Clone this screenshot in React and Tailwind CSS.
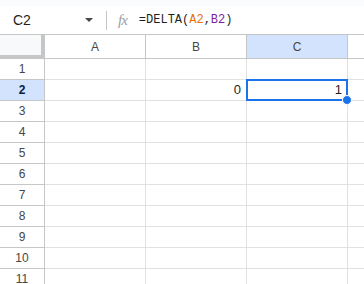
import { useState } from 'react'

const cols = ['A', 'B', 'C']
const rows = [1, 2, 3, 4, 5, 6, 7, 8, 9, 10, 11]

export default function App() {
  const [sel] = useState({ col: 'C', row: 2 })

  const cellValue = (c, r) => {
    if (r === 2 && c === 'B') return '0'
    if (r === 2 && c === 'C') return '1'
    return ''
  }

  return (
    <div className="w-[364px] h-[284px] overflow-hidden bg-white font-['Roboto','Liberation_Sans',sans-serif] text-[#1f1f1f]">
      <div className="h-[6px] bg-[#f9fbfd]" />

      {/* formula bar */}
      <div className="flex items-center h-[29px] border-b border-[#c4c7c5]">
        <div className="w-[80px] pl-[13px] text-[14px] font-['Liberation_Sans',sans-serif] text-[#1f1f1f]">C2</div>
        <svg width="10" height="6" viewBox="0 0 10 6" className="ml-[4px]">
          <path d="M1 1h8L5 5z" fill="#444746" />
        </svg>
        <div className="ml-[12px] w-px h-[19px] bg-[#c4c7c5]" />
        <div className="ml-[11px] text-[15px] italic font-['Liberation_Serif',serif] text-[#9aa0a6] tracking-[-1px]">fx</div>
        <div className="ml-[12px] text-[12px] font-['Liberation_Mono',monospace]">
          =DELTA(<span className="text-[#e8710a]">A2</span>,<span className="text-[#7b1fa2]">B2</span>)
        </div>
      </div>

      {/* column headers */}
      <div className="flex h-[24px]">
        <div className="w-[45px] shrink-0 bg-[#f8f9fa] border-r-[4px] border-b-[4px] border-[#c4c7c5]" />
        {cols.map(c => (
          <div
            key={c}
            className={`w-[101px] shrink-0 flex items-center justify-center text-[12px] text-[#444746] border-r border-b border-[#c4c7c5] font-['Liberation_Sans',sans-serif] ${c === sel.col ? 'bg-[#d3e3fd] text-[#0b57d0]' : ''}`}
          >
            {c}
          </div>
        ))}
        <div className="flex-1 border-b border-[#c4c7c5]" />
      </div>

      {/* rows */}
      {rows.map(r => (
        <div key={r} className="flex h-[21px]">
          <div
            className={`w-[45px] shrink-0 flex items-center justify-center text-[12px] border-r border-b border-[#c4c7c5] font-['Liberation_Sans',sans-serif] ${r === sel.row ? 'bg-[#d3e3fd] text-[#041e49] font-bold' : 'text-[#444746]'}`}
          >
            {r}
          </div>
          {cols.map(c => {
            const active = r === sel.row && c === sel.col
            return (
              <div
                key={c}
                className="relative w-[101px] shrink-0 flex items-center justify-end pr-[5px] text-[13px] font-['Liberation_Sans',sans-serif] border-r border-b border-[#e1e1e1]"
              >
                {cellValue(c, r)}
                {active && (
                  <>
                    <div className="absolute z-10 left-[-1px] top-[-1px] w-[102px] h-[22px] border-2 border-[#1a73e8]" />
                    <div className="absolute z-20 right-[-5px] bottom-[-5px] w-[10px] h-[10px] rounded-full bg-[#1a73e8] border border-white" />
                  </>
                )}
              </div>
            )
          })}
          <div className="flex-1 border-b border-[#e1e1e1]" />
        </div>
      ))}
    </div>
  )
}
